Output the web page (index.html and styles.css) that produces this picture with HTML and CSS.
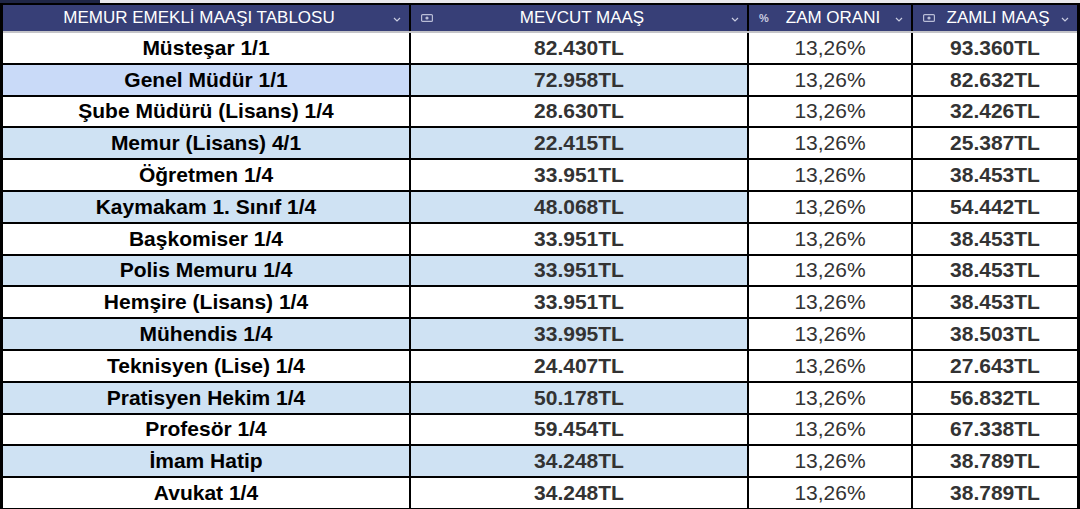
FILE: index.html
```html
<!DOCTYPE html>
<html lang="tr">
<head>
<meta charset="utf-8">
<title>Memur Emekli Maaşı Tablosu</title>
<link rel="stylesheet" href="styles.css">
</head>
<body>
<div class="topstrip"><div class="topstrip-dark"></div><div class="topstrip-light"></div></div>
<div class="sheet">
  <div class="head">
    <div class="hcell">
      <span class="htext htext-first">MEMUR EMEKLİ MAAŞI TABLOSU</span>
      <svg class="chev" viewBox="0 0 8 5" width="8" height="5"><path d="M1 1 L4 4 L7 1" fill="none" stroke="#c9cce0" stroke-width="1.2"/></svg>
    </div>
    <div class="hcell">
      <svg class="ico" viewBox="0 0 12 8" width="12" height="8"><rect x="0.6" y="0.6" width="10.8" height="6.8" rx="1" fill="none" stroke="#b9bdd6" stroke-width="1.2"/><circle cx="6" cy="4" r="1.6" fill="#b9bdd6"/></svg>
      <span class="htext">MEVCUT MAAŞ</span>
      <svg class="chev" viewBox="0 0 8 5" width="8" height="5"><path d="M1 1 L4 4 L7 1" fill="none" stroke="#c9cce0" stroke-width="1.2"/></svg>
    </div>
    <div class="hcell">
      <span class="ico pct">%</span>
      <span class="htext">ZAM ORANI</span>
      <svg class="chev" viewBox="0 0 8 5" width="8" height="5"><path d="M1 1 L4 4 L7 1" fill="none" stroke="#c9cce0" stroke-width="1.2"/></svg>
    </div>
    <div class="hcell">
      <svg class="ico" viewBox="0 0 12 8" width="12" height="8"><rect x="0.6" y="0.6" width="10.8" height="6.8" rx="1" fill="none" stroke="#b9bdd6" stroke-width="1.2"/><circle cx="6" cy="4" r="1.6" fill="#b9bdd6"/></svg>
      <span class="htext">ZAMLI MAAŞ</span>
      <svg class="chev" viewBox="0 0 8 5" width="8" height="5"><path d="M1 1 L4 4 L7 1" fill="none" stroke="#c9cce0" stroke-width="1.2"/></svg>
    </div>
  </div>
  <div class="sep"></div>
  <div class="body">
    <div class="c name">Müsteşar 1/1</div><div class="c num">82.430TL</div><div class="c pctv">13,26%</div><div class="c num">93.360TL</div>
    <div class="c name alt alt-special">Genel Müdür 1/1</div><div class="c num alt">72.958TL</div><div class="c pctv">13,26%</div><div class="c num">82.632TL</div>
    <div class="c name">Şube Müdürü (Lisans) 1/4</div><div class="c num">28.630TL</div><div class="c pctv">13,26%</div><div class="c num">32.426TL</div>
    <div class="c name alt">Memur (Lisans) 4/1</div><div class="c num alt">22.415TL</div><div class="c pctv">13,26%</div><div class="c num">25.387TL</div>
    <div class="c name">Öğretmen 1/4</div><div class="c num">33.951TL</div><div class="c pctv">13,26%</div><div class="c num">38.453TL</div>
    <div class="c name alt">Kaymakam 1. Sınıf 1/4</div><div class="c num alt">48.068TL</div><div class="c pctv">13,26%</div><div class="c num">54.442TL</div>
    <div class="c name">Başkomiser 1/4</div><div class="c num">33.951TL</div><div class="c pctv">13,26%</div><div class="c num">38.453TL</div>
    <div class="c name alt">Polis Memuru 1/4</div><div class="c num alt">33.951TL</div><div class="c pctv">13,26%</div><div class="c num">38.453TL</div>
    <div class="c name">Hemşire (Lisans) 1/4</div><div class="c num">33.951TL</div><div class="c pctv">13,26%</div><div class="c num">38.453TL</div>
    <div class="c name alt">Mühendis 1/4</div><div class="c num alt">33.995TL</div><div class="c pctv">13,26%</div><div class="c num">38.503TL</div>
    <div class="c name">Teknisyen (Lise) 1/4</div><div class="c num">24.407TL</div><div class="c pctv">13,26%</div><div class="c num">27.643TL</div>
    <div class="c name alt">Pratisyen Hekim 1/4</div><div class="c num alt">50.178TL</div><div class="c pctv">13,26%</div><div class="c num">56.832TL</div>
    <div class="c name">Profesör 1/4</div><div class="c num">59.454TL</div><div class="c pctv">13,26%</div><div class="c num">67.338TL</div>
    <div class="c name alt">İmam Hatip</div><div class="c num alt">34.248TL</div><div class="c pctv">13,26%</div><div class="c num">38.789TL</div>
    <div class="c name">Avukat 1/4</div><div class="c num">34.248TL</div><div class="c pctv">13,26%</div><div class="c num">38.789TL</div>
  </div>
</div>
</body>
</html>
```

FILE: styles.css
```css
html, body {
  margin: 0;
  padding: 0;
  background: #000;
  width: 1080px;
  height: 509px;
  overflow: hidden;
  font-family: "Liberation Sans", Arial, sans-serif;
}

.topstrip {
  display: flex;
  height: 3px;
}
.topstrip-dark {
  width: 100px;
  background: #1f2646;
}
.topstrip-light {
  flex: 1;
  background: #e9e9ec;
}

.sheet {
  background: #000;
  padding: 2px 3px 0 3px;
}

.head {
  display: grid;
  grid-template-columns: 406px 336px 162px 164px;
  column-gap: 2px;
}

.hcell {
  height: 26px;
  background: #373f77;
  display: flex;
  align-items: center;
  padding: 0 8px 0 10px;
  color: #fff;
  font-size: 17px;
}

.htext {
  flex: 1;
  text-align: center;
  white-space: nowrap;
  line-height: 26px;
}
.htext-first {
  padding-right: 8px;
}

.ico {
  flex: none;
  display: block;
}
.pct {
  font-size: 11px;
  color: #c9cce0;
  width: 12px;
  font-weight: bold;
}

.chev {
  flex: none;
  display: block;
  margin-top: 2px;
}

.sep {
  height: 2px;
  background: #c4c4c8;
}

.body {
  display: grid;
  grid-template-columns: 406px 336px 162px 164px;
  grid-auto-rows: 29.8px;
  gap: 2px;
}

.c {
  background: #fff;
  display: flex;
  align-items: center;
  justify-content: center;
  font-size: 21px;
  white-space: nowrap;
  color: #333;
}
.name {
  font-weight: bold;
  color: #000;
}
.num {
  font-weight: bold;
}
.pctv {
  font-weight: normal;
}
.alt {
  background: #cfe2f3;
}
.alt-special {
  background: #c9daf8;
}
```
